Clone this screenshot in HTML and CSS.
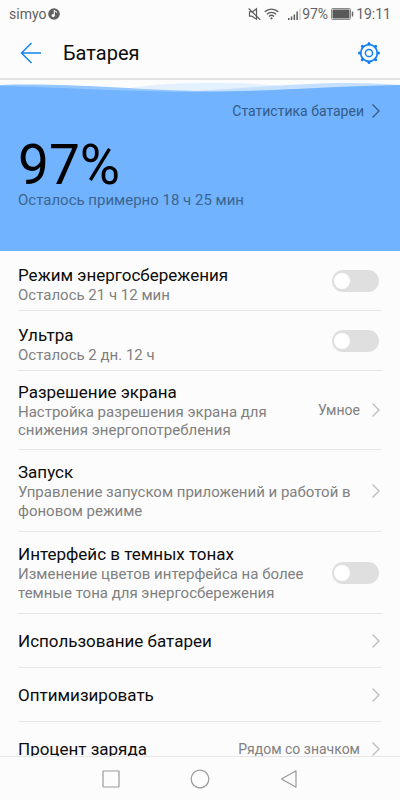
FILE: index.html
```
<!DOCTYPE html>
<html lang="ru">
<head>
<meta charset="utf-8">
<meta name="viewport" content="width=device-width, initial-scale=1">
<title>Батарея</title>
<link rel="stylesheet" href="styles.css">
</head>
<body>
<svg class="defs" aria-hidden="true">
  <symbol id="chevron" viewBox="0 0 10 16"><path d="M1.5 1.5 8 8l-6.500 6.500" fill="none" stroke="currentColor" stroke-width="1.300"/></symbol>
</svg>
<div class="status">
  <span>simyo</span>
  <svg class="note" width="12" height="12" viewBox="0 0 12 12" aria-hidden="true"><circle cx="6" cy="6" r="5.800" fill="#606060"/><path d="M6.300 2.200v5" stroke="#fcfcfc" stroke-width="1.100"/><path d="M6.300 2.500 8.500 3.800v1" fill="none" stroke="#fcfcfc"/><circle cx="5.200" cy="7.600" r="1.600" fill="#fcfcfc"/></svg>
  <span class="spacer"></span>
  <svg width="13" height="14" viewBox="0 0 13 14" fill="none" stroke="#5c5c5c" stroke-width="1.200" aria-hidden="true"><path d="M1.500 4.800v4.400h2.300l4.700 3V1.800L4.800 4.600z"/><path d="M.6 1.500l11.600 11.300"/></svg>
  <svg class="wifi" width="15" height="12" viewBox="0 0 15 12" fill="none" stroke="#5c5c5c" stroke-width="1.300" aria-hidden="true"><path d="M.7 3.800a9.800 9.800 0 0 1 13.600 0M2.900 6.200a6.600 6.600 0 0 1 9.200 0M5 8.500a3.600 3.600 0 0 1 5 0"/><circle cx="7.500" cy="10.300" r="1.100" fill="#5c5c5c" stroke="none"/></svg>
  <svg class="signal" width="13" height="13" viewBox="0 0 13 13" fill="#5c5c5c" aria-hidden="true"><path d="M0 10h1.500v2H0zM2.800 8.500h1.500V12H2.800zM5.600 6.500h1.500V12H5.600zM8.400 3.500h1.500V12H8.400z"/><path fill="#d2d2d2" d="M11.200.5h1.500V12h-1.500z"/></svg>
  <span>97%</span>
  <svg class="cell" width="23" height="12" viewBox="0 0 23 12" aria-hidden="true"><rect x=".5" y=".5" width="19" height="11" rx="1" fill="none" stroke="#8a8a8a"/><rect x="1.500" y="1.500" width="17" height="9" fill="#585858"/><path d="M21.500 3.500v5" stroke="#6a6a6a" stroke-width="1.500"/></svg>
  <span>19:11</span>
</div>
<header class="bar">
  <button class="icon" aria-label="Назад"><svg width="22" height="22" viewBox="0 0 22 22" fill="none" stroke="#1684f0" stroke-width="1.500"><path d="M21 11H1.500M11.500 1 1.500 11l10 10"/></svg></button>
  <h1>Батарея</h1>
  <button class="icon" aria-label="Настройки"><svg width="24" height="24" viewBox="-12 -12 24 24" fill="none" stroke="#0f7ff2"><circle r="8.300" stroke-width="1.700"/><circle r="3.600" stroke-width="1.500"/><g stroke-width="3" stroke-linecap="round"><path id="tooth" d="M0-9.200v-.3"/><use href="#tooth" transform="rotate(45)"/><use href="#tooth" transform="rotate(90)"/><use href="#tooth" transform="rotate(135)"/><use href="#tooth" transform="rotate(180)"/><use href="#tooth" transform="rotate(225)"/><use href="#tooth" transform="rotate(270)"/><use href="#tooth" transform="rotate(315)"/></g></svg></button>
</header>
<main>
  <svg class="waves" viewBox="0 0 400 12" preserveAspectRatio="none" aria-hidden="true">
    <path fill="#e3f0fd" d="M125 7C160 0 230 0 270 3L330 9H125z"/>
    <path fill="#c5e0fe" d="M195 9C260 5 310 1 345 1 370 1 390 2 400 3V12H195z"/>
    <path fill="#94c7ff" d="M0 3C70 1 120 7 195 9 250 10 330 5 400 4V12H0z"/>
    <path fill="#71b3ff" d="M0 4C60 5 100 9 200 10 270 10 330 4 400 3V12H0z"/>
  </svg>
  <section class="hero">
    <a class="stats" href="#stats">Статистика батареи<svg class="chev"><use href="#chevron"/></svg></a>
    <p class="level">97%</p>
    <p class="left">Осталось примерно 18 ч 25 мин</p>
  </section>
  <div class="list">
    <label class="row short"><span class="text"><span class="title">Режим энергосбережения</span><span class="desc">Осталось 21 ч 12 мин</span></span><input class="switch" type="checkbox"></label>
    <label class="row short"><span class="text"><span class="title">Ультра</span><span class="desc">Осталось 2 дн. 12 ч</span></span><input class="switch" type="checkbox"></label>
    <a class="row dense" href="#resolution"><span class="text"><span class="title">Разрешение экрана</span><span class="desc">Настройка разрешения экрана для снижения энергопотребления</span></span><span class="value">Умное</span><svg class="chev"><use href="#chevron"/></svg></a>
    <a class="row tall" href="#launch"><span class="text"><span class="title">Запуск</span><span class="desc">Управление запуском приложений и работой в фоновом режиме</span></span><svg class="chev"><use href="#chevron"/></svg></a>
    <label class="row tall"><span class="text"><span class="title">Интерфейс в темных тонах</span><span class="desc">Изменение цветов интерфейса на более темные тона для энергосбережения</span></span><input class="switch" type="checkbox"></label>
    <a class="row" href="#usage"><span class="text title">Использование батареи</span><svg class="chev"><use href="#chevron"/></svg></a>
    <a class="row" href="#optimize"><span class="text title">Оптимизировать</span><svg class="chev"><use href="#chevron"/></svg></a>
    <a class="row" href="#percent"><span class="text title">Процент заряда</span><span class="value">Рядом со значком</span><svg class="chev"><use href="#chevron"/></svg></a>
  </div>
</main>
<nav class="nav">
  <button class="icon" aria-label="Недавние"><svg width="20" height="20" viewBox="0 0 20 20"><rect x="2" y="2" width="16" height="16" rx=".5"/></svg></button>
  <button class="icon" aria-label="Домой"><svg width="20" height="20" viewBox="0 0 20 20"><circle cx="10" cy="10" r="8.800"/></svg></button>
  <button class="icon" aria-label="Назад"><svg width="20" height="20" viewBox="0 0 20 20"><path d="M17 1.800v16.400L2.500 10z" stroke-linejoin="round"/></svg></button>
</nav>
</body>
</html>
```
FILE: styles.css
```
* { box-sizing: border-box; }
body {
  margin: 0;
  height: 100vh;
  display: flex;
  flex-direction: column;
  overflow: hidden;
  background: #fcfcfc;
  color: #0c0c0c;
  font-family: Roboto, "Noto Sans", sans-serif;
  font-size: 15px;
}
h1, p { margin: 0; font-weight: 400; }
a { color: inherit; text-decoration: none; }
svg { flex: none; display: block; }
.defs { position: absolute; width: 0; height: 0; }
.status {
  flex: none;
  display: flex;
  align-items: center;
  height: 28px;
  padding: 0 9px;
  font-size: 14px;
  color: #626262;
}
.note { margin-left: 2px; }
.spacer { flex: 1; }
.wifi { margin-left: 3px; }
.signal { margin: 0 1px 0 9px; }
.cell { margin: 0 2px 0 3px; }
.icon {
  display: flex;
  padding: 0;
  border: 0;
  background: none;
}
.bar {
  flex: none;
  display: flex;
  align-items: center;
  gap: 21px;
  height: 52px;
  padding: 0 19px 0 20px;
  border-bottom: 2px solid #e2e2e2;
}
.bar h1 { flex: 1; font-size: 20px; line-height: 28px; }
main {
  flex: 1;
  min-height: 0;
  overflow: hidden;
}
.waves { width: 100%; height: 12px; margin-top: 2px; }
.hero {
  height: 157px;
  padding: 7px 18px 0;
  background: #71b3ff;
}
.stats {
  display: flex;
  align-items: center;
  justify-content: flex-end;
  gap: 7px;
  font-size: 14px;
  line-height: 20px;
  color: #335b86;
}
.level { padding-top: 19px; font-size: 55px; line-height: 50px; color: #000; }
.left { line-height: 20px; color: #3b658f; }
.chev { width: 10px; height: 16px; margin-right: 1px; }
.list { padding: 0 18px; }
.row {
  display: flex;
  align-items: center;
  min-height: 54px;
  border-bottom: 1px solid #e6e6e6;
}
.text { flex: 1; }
.title { display: block; font-size: 17px; line-height: 22px; }
.desc { display: block; line-height: 19px; color: #808080; }
.short { min-height: 60px; }
.short .text { padding-top: 7px; }
.dense { min-height: 79px; }
.dense .desc { line-height: 18px; }
.tall { min-height: 82px; }
.value { margin-left: 20px; font-size: 14px; color: #808080; }
.row .chev { margin-left: 11px; color: #bcbcbc; }
.switch {
  appearance: none;
  flex: none;
  display: flex;
  align-items: center;
  width: 47px;
  height: 22px;
  margin: 0 3px 0 20px;
  padding: 0 2px;
  border-radius: 11px;
  background: #dfdfdf;
}
.switch::before {
  content: "";
  width: 16px;
  height: 16px;
  border-radius: 50%;
  background: #fff;
}
.switch:checked { justify-content: flex-end; background: #1684f0; }
.nav {
  flex: none;
  display: flex;
  justify-content: center;
  align-items: center;
  gap: 69px;
  height: 44px;
  border-top: 1px solid #e6e6e6;
}
.nav svg { fill: none; stroke: #999; stroke-width: 1.200; }
```
